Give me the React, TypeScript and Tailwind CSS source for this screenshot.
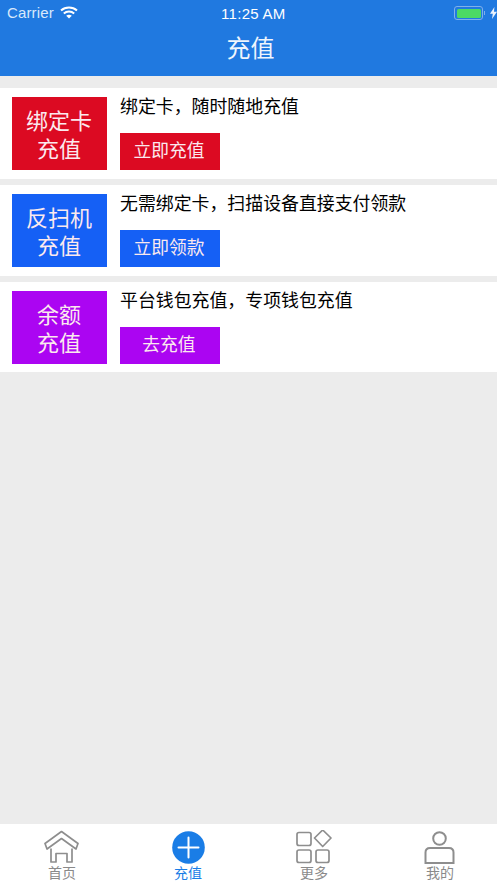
const cjk = "font-['Liberation_Sans','Noto_Sans_CJK_SC',sans-serif]";

interface Item {
  tile: string[];
  desc: string;
  action: string;
  bg: string;
}

const items: Item[] = [
  { tile: ["绑定卡", "充值"], desc: "绑定卡，随时随地充值", action: "立即充值", bg: "bg-[#dc0a22]" },
  { tile: ["反扫机", "充值"], desc: "无需绑定卡，扫描设备直接支付领款", action: "立即领款", bg: "bg-[#1560f5]" },
  { tile: ["余额", "充值"], desc: "平台钱包充值，专项钱包充值", action: "去充值", bg: "bg-[#ab05f2]" },
];

function StatusBar() {
  return (
    <div className="relative flex h-[26px] items-center justify-between pl-[7px] text-white">
      <div className="flex items-center gap-[6px]">
        <span className="text-[15px] tracking-[0.15px] text-[#d8e8fb]">Carrier</span>
        <svg width="18" height="13" viewBox="0 0 18 13" fill="none" stroke="#fff" strokeWidth="2" className="-mt-[2px]">
          <path d="M1 4.6C5.5 .6 12.5 .6 17 4.6" />
          <path d="M3.8 7.4C6.8 4.8 11.2 4.8 14.2 7.4" />
          <path d="M9 12.6 6.2 9.8C7.9 8.5 10.1 8.5 11.8 9.8Z" fill="#fff" stroke="none" />
        </svg>
      </div>
      <span className="absolute left-[221px] top-[3px] text-[15px] font-medium tracking-[0.3px]">11:25 AM</span>
      <div className="flex items-center">
        <div className="flex h-[14px] w-[29px] items-center rounded-[3px] border border-[#7fb0ea] p-[1.5px]">
          <div className="h-full w-full rounded-[1.5px] bg-[#4cd964]" />
        </div>
        <div className="ml-[1px] mr-[5px] h-[4px] w-[1px] bg-[#7fb0ea]" />
        <svg width="7" height="12" viewBox="0 0 7 12" fill="#e8f2fd">
          <path d="M4.4 0 0 6.8h2.8L2 12l5-7.2H4Z" />
        </svg>
      </div>
    </div>
  );
}

function HomeIcon() {
  return (
    <svg width="36" height="34" viewBox="0 0 36 34" fill="none" stroke="#8e8e8e" strokeWidth="1.7" strokeLinejoin="round">
      <path d="M1 13.5 17.5 1.5 34 13.5 32 19 17.5 8.5 3 19Z" />
      <path d="M7 18.5V32h5V23.5h11V32h5V18.5" />
    </svg>
  );
}

function PlusIcon() {
  return (
    <svg width="33" height="33" viewBox="0 0 33 33">
      <circle cx="16.5" cy="16.5" r="16.3" fill="#1a7de6" />
      <path d="M6.5 16.5h20M16.5 6.5v20" stroke="#fff" strokeWidth="2" strokeLinecap="round" />
    </svg>
  );
}

function MoreIcon() {
  return (
    <svg width="36" height="34" viewBox="0 0 36 34" fill="none" stroke="#8e8e8e" strokeWidth="1.7">
      <rect x="1" y="2.5" width="14" height="13" rx="2" />
      <path d="M26.7 0 35 8 26.7 16.5 18.5 8Z" strokeLinejoin="round" />
      <rect x="1" y="20" width="14" height="12.5" rx="2" />
      <rect x="20" y="20" width="13" height="12.5" rx="2" />
    </svg>
  );
}

function UserIcon() {
  return (
    <svg width="32" height="34" viewBox="0 0 32 34" fill="none" stroke="#8e8e8e" strokeWidth="2">
      <circle cx="15.5" cy="8.5" r="6.3" />
      <path d="M1.5 33V22.5c0-2.8 1.7-4.5 4.5-4.5h19c2.8 0 4.5 1.7 4.5 4.5V33Z" />
    </svg>
  );
}

const tabs = [
  { label: "首页", icon: <HomeIcon />, active: false },
  { label: "充值", icon: <PlusIcon />, active: true },
  { label: "更多", icon: <MoreIcon />, active: false },
  { label: "我的", icon: <UserIcon />, active: false },
];

export default function App() {
  return (
    <div className={`flex h-[883px] w-[497px] flex-col overflow-hidden bg-[#ececec] ${cjk}`}>
      <header className="h-[76px] shrink-0 bg-[#2079e0]">
        <StatusBar />
        <div className="flex h-[46px] items-center justify-center pl-[4px] text-[24px] text-[#eef5fd]">充值</div>
      </header>

      <main className="flex flex-1 flex-col gap-[6px] pt-[12px]">
        {items.map((item) => (
          <div key={item.action} className="flex h-[91px] gap-[13px] bg-white pl-[12px] pt-[9px] last:h-[90px]">
            <div className={`flex h-[73px] w-[95px] flex-col items-center justify-center pr-[1px] pt-[5px] text-[22px] leading-[28px] text-[#fbe9ee] ${item.bg}`}>
              {item.tile.map((line) => (
                <span key={line}>{line}</span>
              ))}
            </div>
            <div className="flex h-[73px] flex-col justify-between">
              <p className="-mt-[1px] text-[17.9px] leading-[22px] text-black">{item.desc}</p>
              <div className={`flex h-[37px] w-[100px] items-center justify-center pr-[2px] text-[17.75px] text-[#fbe9ee] ${item.bg}`}>
                {item.action}
              </div>
            </div>
          </div>
        ))}
      </main>

      <nav className="-ml-[1px] grid h-[59px] shrink-0 grid-cols-[repeat(4,126px)] bg-white">
        {tabs.map((tab) => (
          <div key={tab.label} className="flex flex-col items-center pt-[6px]">
            <div className="flex h-[34px] items-center justify-center">{tab.icon}</div>
            <span className={`mt-[1px] text-[14px] leading-[16px] ${tab.active ? "text-[#1a7de6]" : "text-[#8a8a8a]"}`}>
              {tab.label}
            </span>
          </div>
        ))}
      </nav>
    </div>
  );
}
